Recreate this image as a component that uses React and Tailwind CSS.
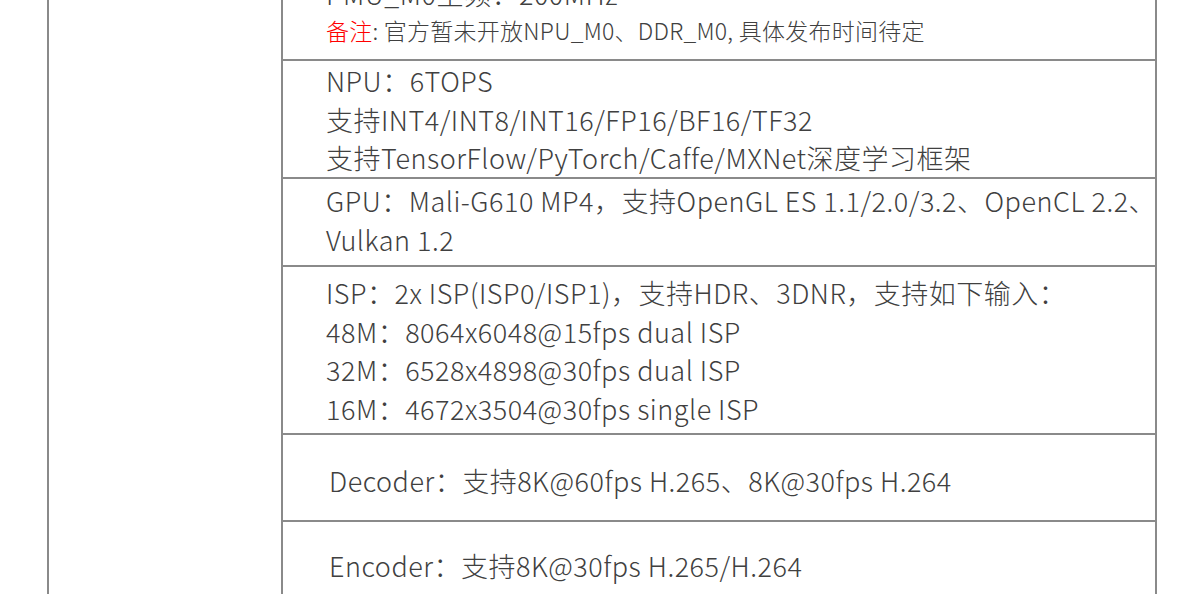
export default function App() {
  const font = { fontFamily: '"Noto Sans CJK SC", "Noto Sans", sans-serif' };
  return (
    <div className="w-[1200px] h-[594px] overflow-hidden bg-white text-[#404040] font-light tracking-[0.5px]" style={font}>
      <div className="ml-[47px] w-[1110px] flex border-l-2 border-r-2 border-[#8a8a8a] min-h-[700px]">
        <div className="w-[234px] shrink-0 border-r-2 border-[#8a8a8a]"></div>
        <div className="flex-1 flex flex-col">
          <div className="h-[61px] border-b-2 border-[#8a8a8a] flex flex-col justify-end pb-[12px] pl-[43px] overflow-hidden">
            <div className="text-[27px] leading-[38px] whitespace-nowrap">PMU_M0主频：200MHz</div>
            <div className="text-[23px] leading-[34px] whitespace-nowrap tracking-[0.25px]">
              <span className="text-[#ff0000]">备注</span>: 官方暂未开放NPU_M0、DDR_M0, 具体发布时间待定
            </div>
          </div>
          <div className="h-[118px] border-b-2 border-[#8a8a8a] pl-[43px] pt-[1px] text-[27px] leading-[38.5px] whitespace-nowrap">
            <div>NPU：6TOPS</div>
            <div>支持INT4/INT8/INT16/FP16/BF16/TF32</div>
            <div>支持TensorFlow/PyTorch/Caffe/MXNet深度学习框架</div>
          </div>
          <div className="h-[88px] border-b-2 border-[#8a8a8a] pl-[43px] pt-[3px] text-[27px] leading-[38.5px] whitespace-nowrap">
            <div>GPU：Mali-G610 MP4，支持OpenGL ES 1.1/2.0/3.2、OpenCL 2.2、</div>
            <div>Vulkan 1.2</div>
          </div>
          <div className="h-[168px] border-b-2 border-[#8a8a8a] pl-[43px] pt-[7px] text-[27px] leading-[38.5px] whitespace-nowrap">
            <div>ISP：2x ISP(ISP0/ISP1)，支持HDR、3DNR，支持如下输入：</div>
            <div>48M：8064x6048@15fps dual ISP</div>
            <div>32M：6528x4898@30fps dual ISP</div>
            <div>16M：4672x3504@30fps single ISP</div>
          </div>
          <div className="h-[87px] border-b-2 border-[#8a8a8a] pl-[46px] flex items-center text-[27px] leading-[38.5px] whitespace-nowrap">
            <div className="pt-[8px]">Decoder：支持8K@60fps H.265、8K@30fps H.264</div>
          </div>
          <div className="h-[120px] pl-[46px] pt-[25px] text-[27px] leading-[38.5px] whitespace-nowrap">
            <div>Encoder：支持8K@30fps H.265/H.264</div>
          </div>
        </div>
      </div>
    </div>
  );
}
